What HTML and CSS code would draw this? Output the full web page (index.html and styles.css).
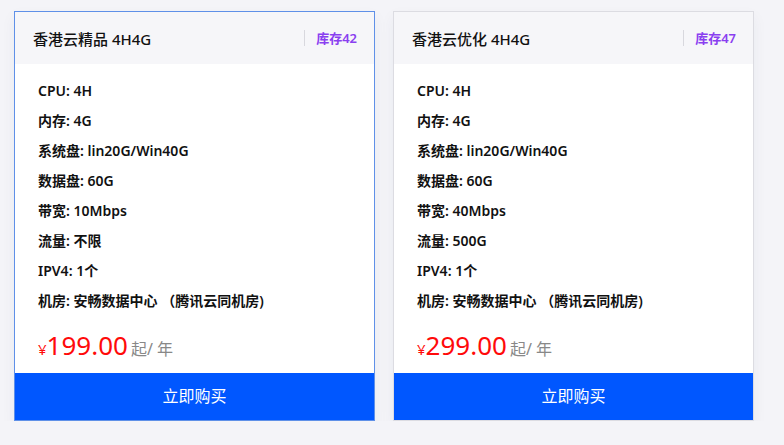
FILE: index.html
```html
<!DOCTYPE html>
<html lang="zh-CN">
<head>
	<meta charset="UTF-8">
	<title>香港云</title>
	<link rel="stylesheet" href="styles.css">
</head>
<body>
	<div class="list">
		<div class="card active">
			<div class="card-head">
				<span class="name">香港云精品 4H4G</span>
				<span class="stock">库存42</span>
			</div>
			<ul class="spec">
				<li>CPU: 4H</li>
				<li>内存: 4G</li>
				<li>系统盘: lin20G/Win40G</li>
				<li>数据盘: 60G</li>
				<li>带宽: 10Mbps</li>
				<li>流量: 不限</li>
				<li>IPV4: 1个</li>
				<li>机房: 安畅数据中心 （腾讯云同机房)</li>
			</ul>
			<div class="price"><span class="yen">¥</span><span class="num">199.00</span><span class="unit">起/ 年</span></div>
			<a class="buy" href="#">立即购买</a>
		</div>
		<div class="card">
			<div class="card-head">
				<span class="name">香港云优化 4H4G</span>
				<span class="stock">库存47</span>
			</div>
			<ul class="spec">
				<li>CPU: 4H</li>
				<li>内存: 4G</li>
				<li>系统盘: lin20G/Win40G</li>
				<li>数据盘: 60G</li>
				<li>带宽: 40Mbps</li>
				<li>流量: 500G</li>
				<li>IPV4: 1个</li>
				<li>机房: 安畅数据中心 （腾讯云同机房)</li>
			</ul>
			<div class="price"><span class="yen">¥</span><span class="num">299.00</span><span class="unit">起/ 年</span></div>
			<a class="buy" href="#">立即购买</a>
		</div>
	</div>
</body>
</html>
```

FILE: styles.css
```css
body{
	margin: 0;
	padding: 0;
	background: #f4f4f8;
	font-family: "Noto Sans", "Noto Sans CJK SC", sans-serif;
	color: #111;
}
.list{
	display: flex;
	gap: 18px;
	padding: 11px 0 0 14px;
}
.card{
	width: 359px;
	background: #fff;
	border: 1px solid #dcdce2;
	box-shadow: 0 6px 14px rgba(40,50,90,0.05);
	display: flex;
	flex-direction: column;
}
.card.active{
	border-color: #5f90e8;
}
.card-head{
	height: 52px;
	background: #f6f6f9;
	display: flex;
	align-items: center;
	justify-content: space-between;
	padding: 0 17px 0 18px;
}
.name{
	font-size: 15px;
	font-weight: 500;
}
.stock{
	font-size: 13px;
	color: #8a3ff0;
	border-left: 1px solid #d8d8de;
	padding-left: 11px;
	line-height: 16px;
	font-weight: 600;
}
.spec{
	list-style: none;
	margin: 0;
	padding: 12px 0 0 23px;
}
.spec li{
	height: 30px;
	line-height: 30px;
	font-size: 14px;
	font-weight: 600;
}
.price{
	padding: 11px 0 0 23px;
	height: 46px;
	display: flex;
	align-items: baseline;
	color: #ff0a0a;
}
.yen{
	font-size: 15px;
}
.num{
	font-size: 26px;
	margin-right: 3px;
}
.unit{
	font-size: 16px;
	color: #888;
}
.buy{
	height: 47px;
	line-height: 47px;
	background: #0057ff;
	color: #fff;
	text-align: center;
	font-size: 16px;
	text-decoration: none;
}
```
